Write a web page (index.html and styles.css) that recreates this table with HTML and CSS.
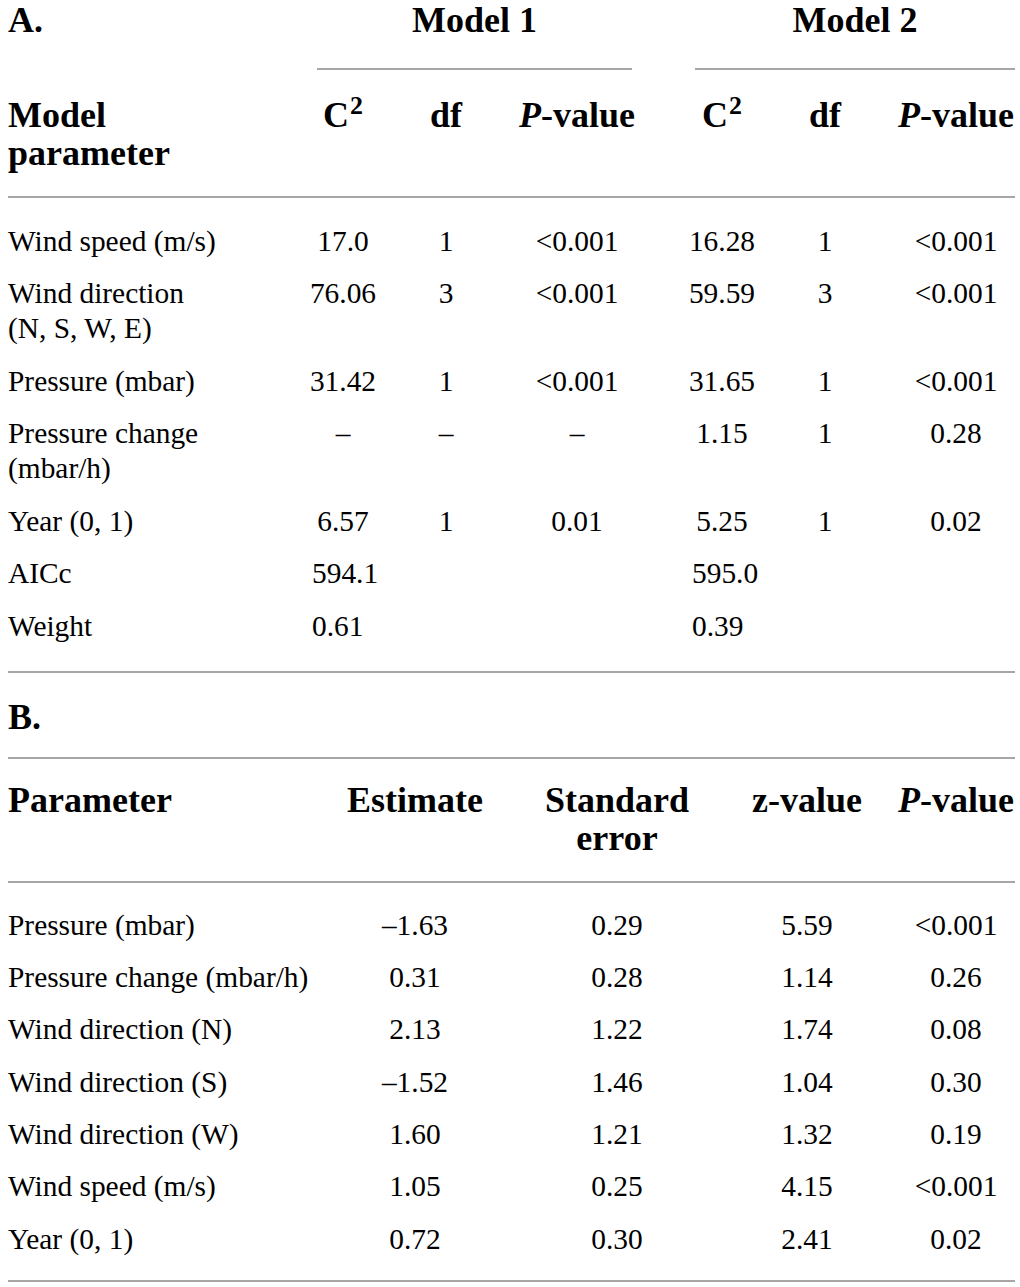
FILE: index.html
```html
<!DOCTYPE html>
<html lang="en">
<head>
<meta charset="utf-8">
<title>Model comparison tables</title>
<link rel="stylesheet" href="styles.css">
</head>
<body>
<table class="tbl tbl-a">
  <colgroup>
    <col class="w-lab-a"><col class="w-c1"><col class="w-d1"><col class="w-p1"><col class="w-c2"><col class="w-d2"><col class="w-p2">
  </colgroup>
  <thead>
    <tr class="grp-row">
      <th class="lab">A.</th>
      <th colspan="3"><div class="grp-line g1">Model 1</div></th>
      <th colspan="3"><div class="grp-line g2">Model 2</div></th>
    </tr>
    <tr class="head-row">
      <th class="lab">Model<br>parameter</th>
      <th>C<sup>2</sup></th>
      <th>df</th>
      <th><i>P</i>-value</th>
      <th>C<sup>2</sup></th>
      <th class="d2">df</th>
      <th><i>P</i>-value</th>
    </tr>
  </thead>
  <tbody>
    <tr><td class="lab">Wind speed (m/s)</td><td>17.0</td><td>1</td><td>&lt;0.001</td><td>16.28</td><td class="d2">1</td><td>&lt;0.001</td></tr>
    <tr><td class="lab">Wind direction<br>(N, S, W, E)</td><td>76.06</td><td>3</td><td>&lt;0.001</td><td>59.59</td><td class="d2">3</td><td>&lt;0.001</td></tr>
    <tr><td class="lab">Pressure (mbar)</td><td>31.42</td><td>1</td><td>&lt;0.001</td><td>31.65</td><td class="d2">1</td><td>&lt;0.001</td></tr>
    <tr><td class="lab">Pressure change<br>(mbar/h)</td><td>–</td><td>–</td><td>–</td><td>1.15</td><td class="d2">1</td><td>0.28</td></tr>
    <tr><td class="lab">Year (0, 1)</td><td>6.57</td><td>1</td><td>0.01</td><td>5.25</td><td class="d2">1</td><td>0.02</td></tr>
    <tr><td class="lab">AICc</td><td class="lv1">594.1</td><td></td><td></td><td class="lv2">595.0</td><td></td><td></td></tr>
    <tr><td class="lab">Weight</td><td class="lv1">0.61</td><td></td><td></td><td class="lv2">0.39</td><td></td><td></td></tr>
  </tbody>
</table>

<div class="sec-label">B.</div>

<table class="tbl tbl-b">
  <colgroup>
    <col class="w-lab-b"><col class="w-est"><col class="w-se"><col class="w-z"><col class="w-pb">
  </colgroup>
  <thead>
    <tr class="head-row">
      <th class="lab">Parameter</th>
      <th>Estimate</th>
      <th>Standard<br>error</th>
      <th>z-value</th>
      <th><i>P</i>-value</th>
    </tr>
  </thead>
  <tbody>
    <tr><td class="lab">Pressure (mbar)</td><td>–1.63</td><td>0.29</td><td>5.59</td><td>&lt;0.001</td></tr>
    <tr><td class="lab">Pressure change (mbar/h)</td><td>0.31</td><td>0.28</td><td>1.14</td><td>0.26</td></tr>
    <tr><td class="lab">Wind direction (N)</td><td>2.13</td><td>1.22</td><td>1.74</td><td>0.08</td></tr>
    <tr><td class="lab">Wind direction (S)</td><td>–1.52</td><td>1.46</td><td>1.04</td><td>0.30</td></tr>
    <tr><td class="lab">Wind direction (W)</td><td>1.60</td><td>1.21</td><td>1.32</td><td>0.19</td></tr>
    <tr><td class="lab">Wind speed (m/s)</td><td>1.05</td><td>0.25</td><td>4.15</td><td>&lt;0.001</td></tr>
    <tr><td class="lab">Year (0, 1)</td><td>0.72</td><td>0.30</td><td>2.41</td><td>0.02</td></tr>
  </tbody>
</table>
</body>
</html>
```
FILE: styles.css
```css
html, body {
  background: #ffffff;
}
body {
  margin: 0;
  padding: 1px 0 0 8px;
  font-family: "Liberation Serif", "Times New Roman", serif;
  color: #000000;
}

.tbl {
  border-collapse: separate;
  border-spacing: 0;
  table-layout: fixed;
  width: 1007px;
}

.tbl th,
.tbl td {
  padding: 0;
  vertical-align: top;
  text-align: center;
  white-space: nowrap;
}

.tbl th {
  font-weight: bold;
  font-size: 36px;
  line-height: 38px;
}

.tbl td {
  font-size: 29.4px;
  line-height: 35px;
}

.tbl .lab {
  text-align: left;
}

sup {
  font-size: 0.72em;
  line-height: 0;
  vertical-align: 0.5em;
  margin-left: 1px;
}

/* Table A columns */
.w-lab-a { width: 282px; }
.w-c1 { width: 106px; }
.w-d1 { width: 100px; }
.w-p1 { width: 162px; }
.w-c2 { width: 128px; }
.w-d2 { width: 111px; }
.w-p2 { width: 118px; }

.tbl-a .d2 {
  padding-right: 33px;
}

.grp-line {
  border-bottom: 2px solid #a6a6a6;
  padding-bottom: 29px;
}
.g1 { margin: 0 26px 0 27px; }
.g2 { margin: 0 0 0 37px; }

.tbl-a .head-row th {
  padding-top: 26px;
  padding-bottom: 24px;
  border-bottom: 2px solid #a6a6a6;
}

.tbl-a td {
  padding-top: 8.75px;
  padding-bottom: 8.75px;
}
.tbl-a tbody tr:first-child td {
  padding-top: 25.75px;
}
.tbl-a tbody tr:last-child td {
  padding-bottom: 27.25px;
  border-bottom: 2px solid #a6a6a6;
}
.tbl-a td.lv1 {
  text-align: left;
  padding-left: 22px;
}
.tbl-a td.lv2 {
  text-align: left;
  padding-left: 34px;
}

/* Section label */
.sec-label {
  font-weight: bold;
  font-size: 36px;
  line-height: 38px;
  padding: 24.7px 0 21.3px;
}

/* Table B columns */
.w-lab-b { width: 305px; }
.w-est { width: 204px; }
.w-se { width: 200px; }
.w-z { width: 180px; }
.w-pb { width: 118px; }

.tbl-b .head-row th {
  border-top: 2px solid #a6a6a6;
  border-bottom: 2px solid #a6a6a6;
  padding-top: 21.7px;
  padding-bottom: 24.3px;
}

.tbl-b td {
  padding-top: 8.67px;
  padding-bottom: 8.67px;
}
.tbl-b tbody tr:first-child td {
  padding-top: 24.67px;
}
.tbl-b tbody tr:last-child td {
  padding-bottom: 23.67px;
  border-bottom: 2px solid #a6a6a6;
}
```
